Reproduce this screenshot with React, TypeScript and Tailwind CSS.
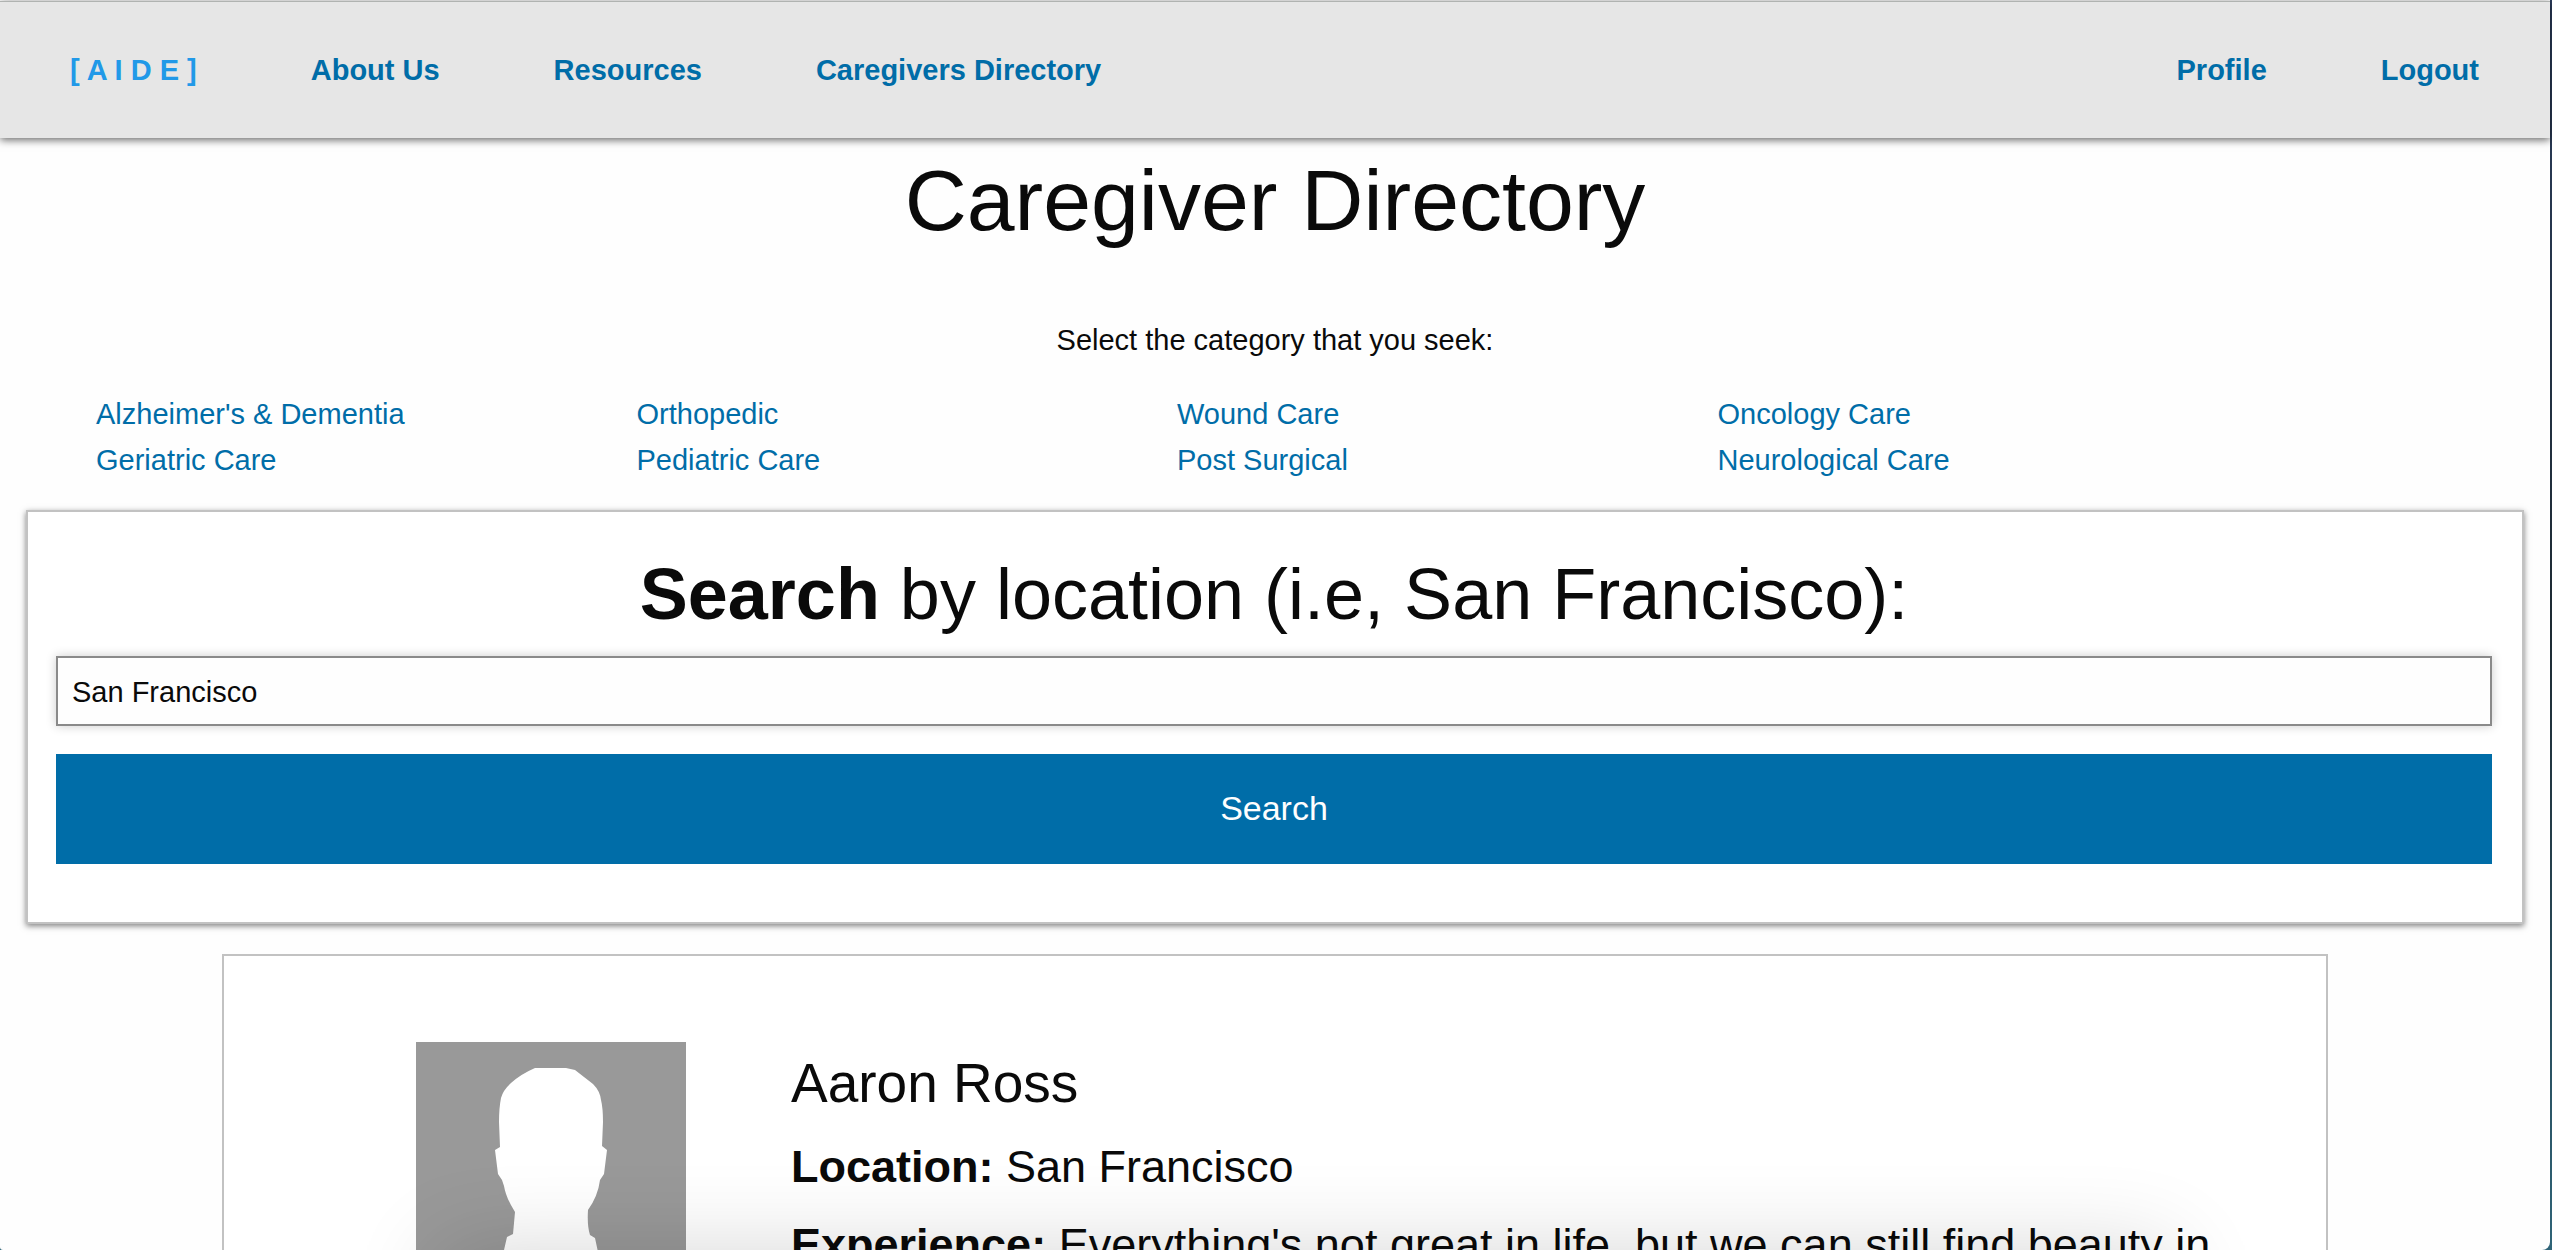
const primaryLinks = ["About Us", "Resources", "Caregivers Directory"];
const accountLinks = ["Profile", "Logout"];
const categories = [
  ["Alzheimer's & Dementia", "Geriatric Care"],
  ["Orthopedic", "Pediatric Care"],
  ["Wound Care", "Post Surgical"],
  ["Oncology Care", "Neurological Care"],
];

function NavBar() {
  return (
    <nav className="relative z-10 flex items-center justify-between border-t border-[#b0b3b1] bg-[#e6e6e6] py-[45px] pr-[71px] pl-[70px] font-bold leading-[46px] text-[#006da8] shadow-[0_2px_8px_rgba(0,0,0,0.6)]">
      <div className="flex gap-[114px]">
        <a href="#home" className="text-[#2199e8]">[ A I D E ]</a>
        {primaryLinks.map((t) => (
          <a key={t} href="#">{t}</a>
        ))}
      </div>
      <div className="flex gap-[114px]">
        {accountLinks.map((t) => (
          <a key={t} href="#">{t}</a>
        ))}
      </div>
    </nav>
  );
}

function SearchPanel() {
  return (
    <form
      onSubmit={(e) => e.preventDefault()}
      className="mx-[26px] mt-[27px] border-2 border-[#c2c2c2] bg-white pt-8 pr-[30px] pb-[58px] pl-7 shadow-[0_2px_6px_rgba(0,0,0,0.5)]"
    >
      <h2 className="text-center text-[72px] leading-[101px]">
        <label htmlFor="location">
          <strong>Search</strong> by location (i.e, San Francisco):
        </label>
      </h2>
      <input
        id="location"
        type="text"
        defaultValue="San Francisco"
        className="mt-[11px] block h-[70px] w-full border-2 border-[#8a8a8a] bg-[#fefefe] px-[14px] pt-0.5 shadow-[0_0_10px_rgba(0,0,0,0.2)] outline-none"
      />
      <button type="submit" className="mt-7 block h-[110px] w-full bg-[#006da8] pb-0.5 text-[34px] text-[#fefefe]">
        Search
      </button>
    </form>
  );
}

function Avatar() {
  return (
    <svg viewBox="0 0 270 270" className="h-[270px] w-[270px] shrink-0" role="img" aria-label="Profile silhouette">
      <rect width="270" height="270" fill="#999" />
      <path
        fill="#fff"
        d="M119 26H150L159 28L177 42Q184 49 185 58Q187 66 187 80L186 104L191 108L188 132L184 138Q182 154 172 168Q171 184 174 193L179 196L182 210Q200 226 230 236Q252 244 260 270H10Q18 244 40 236Q74 226 88 208L91 195L97 192L99 170Q90 156 88 144L86 138L82 132L79 108L84 105L83 80Q83 66 85 56Q87 48 95 41Q105 32 119 26Z"
      />
    </svg>
  );
}

function CaregiverCard() {
  return (
    <article className="mx-[222px] mt-[30px] flex border-2 border-[#c2c2c2] bg-white px-[192px] py-[86px]">
      <Avatar />
      <div className="ml-[105px] grow text-[45px] leading-[63px] whitespace-nowrap">
        <h3 className="text-[55px] leading-[82px]">Aaron Ross</h3>
        <p className="mt-[11px]">
          <strong>Location:</strong> San Francisco
        </p>
        <p className="mt-[15px]">
          <strong>Experience:</strong> Everything's not great in life, but we can still find beauty in
        </p>
      </div>
    </article>
  );
}

export default function App() {
  return (
    <div className="relative flex h-screen overflow-hidden bg-[#2f6478] font-['Liberation_Sans',Arial,sans-serif] text-[29px] text-[#0a0a0a]">
      <div className="relative min-w-0 grow rounded-br-[8px] rounded-bl-[3px] bg-[#fefefe] pt-px">
        <NavBar />
        <h1 className="text-center text-[86px] leading-[124px]">Caregiver Directory</h1>
        <p className="mt-[55px] text-center leading-[46px]">Select the category that you seek:</p>
        <div className="mt-7 mr-[292px] ml-24 grid grid-cols-4 leading-[46px] text-[#006da8]">
          {categories.map((group) => (
            <ul key={group[0]}>
              {group.map((t) => (
                <li key={t}>
                  <a href="#">{t}</a>
                </li>
              ))}
            </ul>
          ))}
        </div>
        <SearchPanel />
        <CaregiverCard />
      </div>
      <div className="w-0.5 shrink-0 bg-linear-to-b from-[#2b3c5c] via-[#1d2a33] to-[#2f6478]" />
      <div className="pointer-events-none absolute top-full right-[380px] left-[440px] z-20 h-40 shadow-[0_0_90px_rgba(0,0,0,0.16)]" />
    </div>
  );
}
